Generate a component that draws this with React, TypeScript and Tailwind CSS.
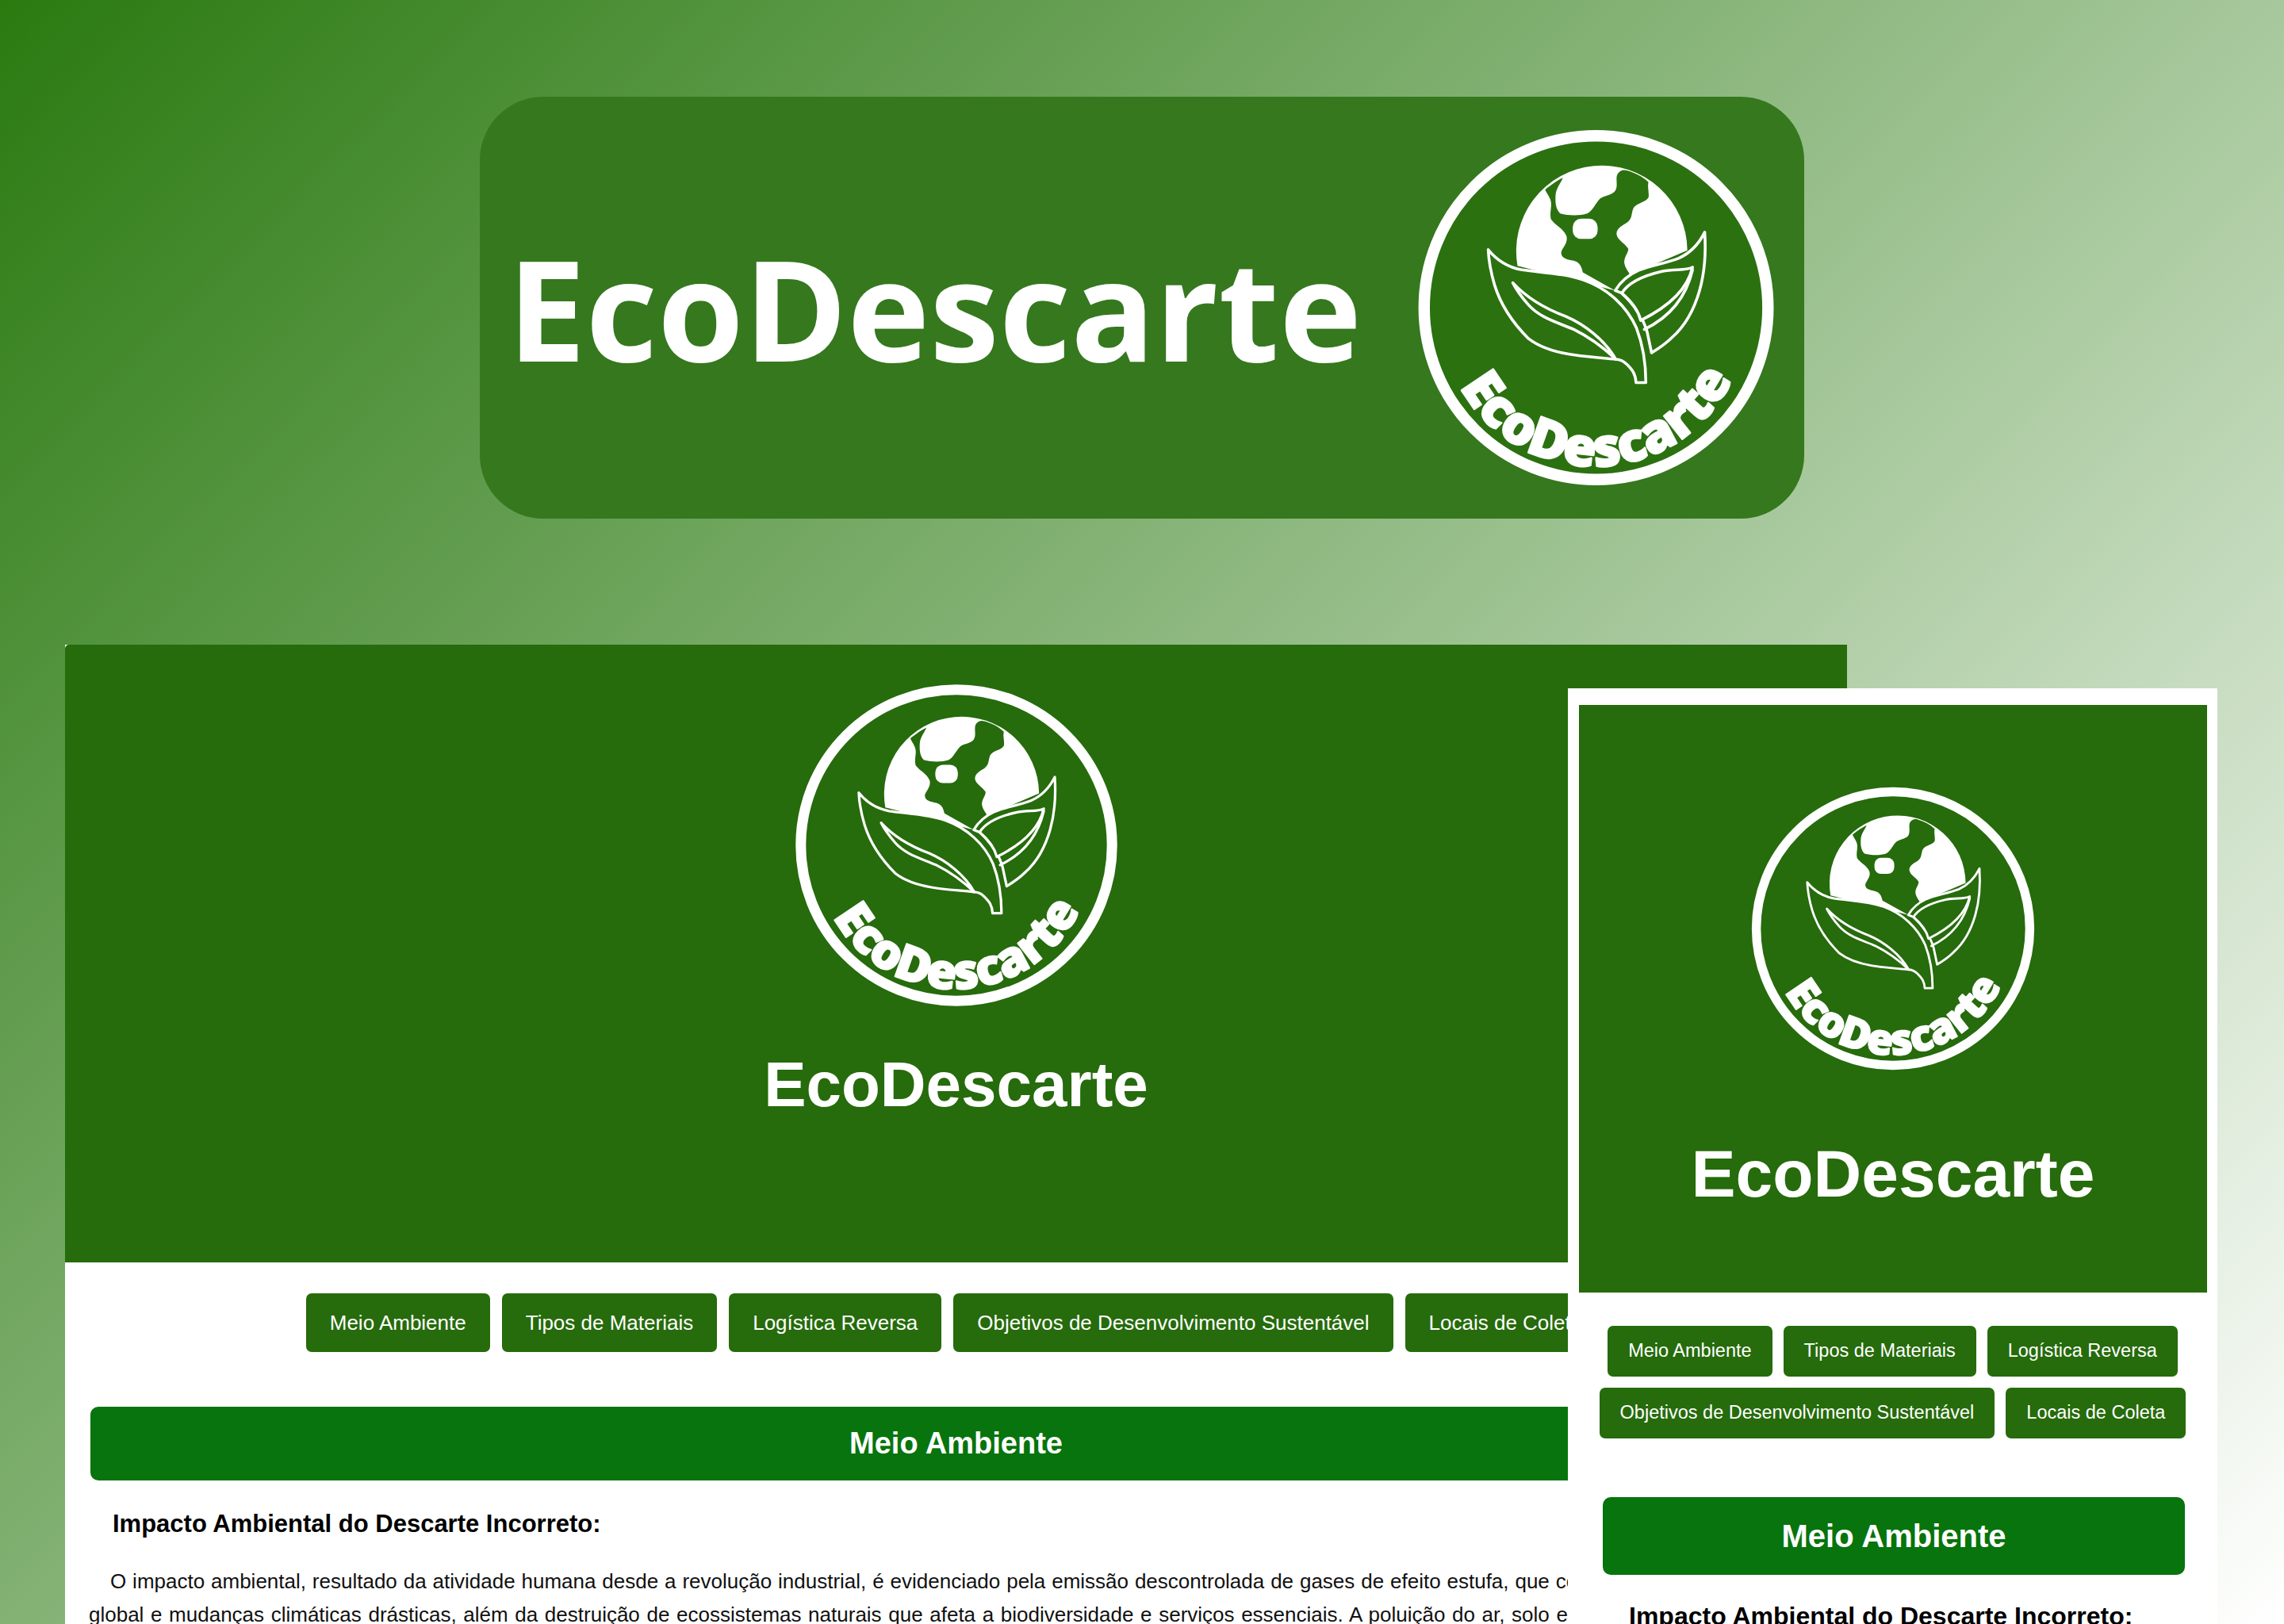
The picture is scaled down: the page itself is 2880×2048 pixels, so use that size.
const EcoLogo = ({ fill = "#2b7110", className = "" }: { fill?: string; className?: string }) => (
  <svg viewBox="110 50 1392 1392" className={className}>
    <circle cx="806" cy="746" r="663" fill={fill} stroke="#fff" strokeWidth="44" />
    {/* globe */}
    <path d="M503 585A330 330 0 1 1 1158 525L935 620L880 680Z" fill="#fff" />
    <path
      d="M610 290C630 275 655 255 678 245C670 265 652 285 650 310C648 340 650 365 668 383C700 392 745 392 772 383C795 370 802 345 822 325C840 312 868 312 880 295C892 275 880 250 888 232C895 218 910 212 925 217C955 225 985 240 1008 262C1003 280 1012 305 1008 322C995 342 965 340 950 362C940 385 948 400 925 418C905 430 885 440 885 462C888 485 915 495 930 518C932 535 912 550 915 575C918 590 925 600 935 615L880 680L755 610C750 590 745 572 720 565C695 560 668 555 672 530C680 510 698 495 692 470C680 440 650 430 632 405C625 375 640 350 628 325C622 310 612 300 610 290Z"
      fill={fill}
    />
    <rect x="716" y="403" width="96" height="78" rx="32" fill="#fff" />
    {/* big leaf */}
    <path
      d="M390 522C425 565 465 590 520 600C600 612 680 612 760 640C850 672 925 740 962 825C985 885 998 960 998 1035H960C958 1000 945 985 925 965C910 950 895 945 880 945C820 938 755 935 700 925C640 915 590 900 545 865C490 810 440 740 415 660C400 610 392 565 390 522Z"
      fill={fill}
      stroke="#fff"
      strokeWidth="11"
      strokeLinejoin="round"
    />
    <path
      d="M485 650C540 710 610 750 690 780C760 810 840 870 882 945C840 905 790 865 720 830C650 800 590 785 545 735C525 712 500 680 485 650Z"
      fill={fill}
      stroke="#fff"
      strokeWidth="11"
      strokeLinejoin="round"
    />
    {/* small leaf */}
    <path
      d="M880 680C900 645 930 620 970 602C1020 582 1075 575 1125 555C1170 535 1205 495 1225 455C1230 530 1225 610 1205 680C1185 750 1150 815 1100 860C1075 885 1045 905 1020 920L1003 840C990 790 950 730 905 690Z"
      fill={fill}
      stroke="#fff"
      strokeWidth="11"
      strokeLinejoin="round"
    />
    <path
      d="M905 690C930 650 990 622 1060 606C1110 595 1150 605 1178 590C1160 670 1090 740 978 795C970 760 940 720 905 690Z"
      fill={fill}
      stroke="#fff"
      strokeWidth="11"
      strokeLinejoin="round"
    />
    <path d="M992 830C1075 790 1150 720 1178 600" fill="none" stroke="#fff" strokeWidth="11" strokeLinecap="round" />
    <path d="M270 1030A590 590 0 0 0 1342 1000" id="eco-arc" fill="none" />
    <text
      fontFamily="'Open Sans', sans-serif"
      fontWeight="800"
      fontSize="206"
      fill="#fff"
      stroke="#fff"
      strokeWidth="7"
      strokeLinejoin="round"
      textAnchor="middle"
    >
      <textPath href="#eco-arc" startOffset="50%">
        EcoDescarte
      </textPath>
    </text>
  </svg>
);

const navItems = ["Meio Ambiente", "Tipos de Materiais", "Logística Reversa", "Objetivos de Desenvolvimento Sustentável", "Locais de Coleta"];

const DesktopWindow = () => (
  <div className="absolute left-[82px] top-[813px] h-[1235px] w-[2247px] overflow-hidden bg-white font-['Liberation_Sans',Arial,sans-serif]">
    <div className="flex h-[779px] flex-col items-center rounded-tl-[5px] bg-[#266b0c] pt-[47px]">
      <EcoLogo fill="#266b0c" className="h-[412px] w-[412px]" />
      <h1 className="mt-[50px] text-[80px] font-bold leading-[92px] text-white">EcoDescarte</h1>
    </div>
    <nav className="mt-[39px] flex justify-center gap-[15px] whitespace-nowrap">
      {navItems.map((item) => (
        <a key={item} className="flex h-[74px] items-center rounded-[7px] bg-[#266b0c] px-[30px] text-[26px] text-white">
          {item}
        </a>
      ))}
    </nav>
    <div className="mx-[32px] mt-[69px] flex h-[93px] items-center justify-center rounded-[10px] bg-[#07740d] text-[38px] font-bold text-white">
      Meio Ambiente
    </div>
    <div className="px-[30px]">
      <h2 className="mt-[36px] pl-[30px] text-[31px] font-bold leading-[38px] text-black">Impacto Ambiental do Descarte Incorreto:</h2>
      <p className="mt-[32px] text-justify indent-[27px] text-[26px] leading-[42px] text-[#111]">
        O impacto ambiental, resultado da atividade humana desde a revolução industrial, é evidenciado pela emissão descontrolada de gases de efeito estufa, que contribui para o aquecimento global e mudanças climáticas drásticas, além da destruição de ecossistemas naturais que afeta a biodiversidade e serviços essenciais. A poluição do ar, solo e água compromete a saúde humana e a qualidade de vida.
      </p>
    </div>
  </div>
);

const MobileWindow = () => (
  <div className="absolute left-[1977px] top-[868px] h-[1180px] w-[819px] overflow-hidden bg-white font-['Liberation_Sans',Arial,sans-serif]">
    <div className="ml-[14px] mt-[21px] flex h-[741px] w-[792px] flex-col items-center bg-[#266b0c] pt-[101px]">
      <EcoLogo fill="#266b0c" className="h-[362px] w-[362px]" />
      <h1 className="mt-[80px] text-[84px] font-bold leading-[96px] text-white">EcoDescarte</h1>
    </div>
    <nav className="mt-[42px] flex flex-wrap justify-center gap-x-[14px] gap-y-[14px] whitespace-nowrap">
      {navItems.map((item) => (
        <a key={item} className="flex h-[64px] items-center rounded-[7px] bg-[#266b0c] px-[26px] text-[23.5px] text-white">
          {item}
        </a>
      ))}
    </nav>
    <div className="ml-[44px] mt-[74px] flex h-[98px] w-[734px] items-center justify-center rounded-[10px] bg-[#07740d] text-[40px] font-bold text-white">
      Meio Ambiente
    </div>
    <h2 className="ml-[77px] mt-[32px] text-[32px] font-bold leading-[40px] text-black">Impacto Ambiental do Descarte Incorreto:</h2>
  </div>
);

export default function App() {
  return (
    <div className="relative h-[2048px] w-[2880px] overflow-hidden bg-[linear-gradient(135deg,#2a7a10,#ffffff)]">
      <div className="flex justify-center pt-[122px]">
        <div className="flex h-[532px] w-[1670px] items-center rounded-[80px] bg-[#35781e] pl-[35px] pr-[35px]">
          <span className="font-['Open_Sans',sans-serif] text-[176px] font-bold leading-none text-white">EcoDescarte</span>
          <EcoLogo fill="#2b7110" className="ml-[68px] h-[464px] w-[464px]" />
        </div>
      </div>
      <DesktopWindow />
      <MobileWindow />
    </div>
  );
}
